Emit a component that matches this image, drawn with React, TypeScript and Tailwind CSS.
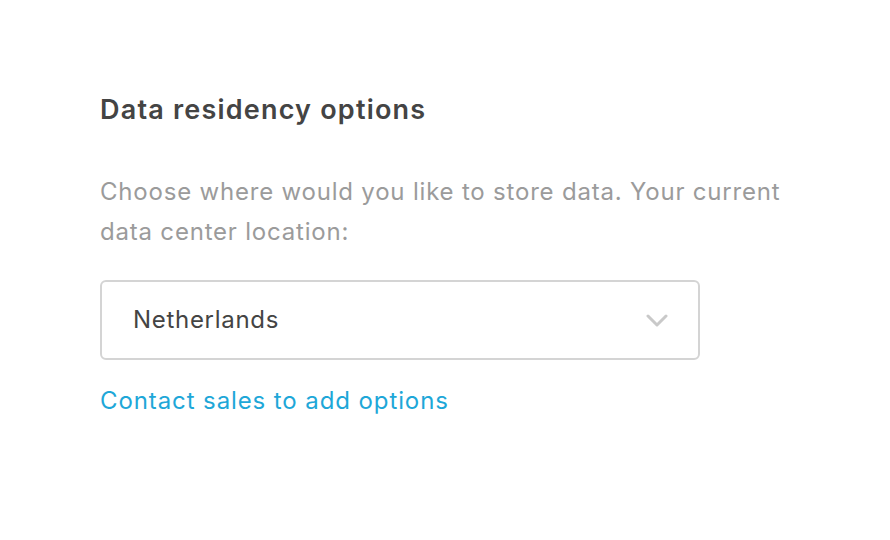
export default function App() {
  return (
    <div
      className="min-h-[540px] w-full bg-white pl-[100px] pt-[92px]"
      style={{ fontFamily: "Inter, sans-serif" }}
    >
      <h2 className="text-[27px] font-semibold leading-[36px] tracking-[1.2px] text-[#444444]">Data residency options</h2>

      <p className="mt-[44px] w-[700px] text-[24px] leading-[40px] tracking-[0.8px] text-[#9b9b9b]">
        Choose where would you like to store data. Your current data center location:
      </p>

      {/* Region select */}
      <div className="mt-[28px] flex h-[80px] w-[600px] items-center justify-between rounded-[6px] border-2 border-[#d4d4d4] pl-[31px] pr-[30px]">
        <span className="text-[24px] tracking-[0.7px] text-[#444444]">Netherlands</span>
        <svg width="22" height="13" viewBox="0 0 22 13" fill="none">
          <path d="M2 2l9 9 9-9" stroke="#c9c9c9" strokeWidth="3" strokeLinecap="round" strokeLinejoin="round" />
        </svg>
      </div>

      <a href="#" className="mt-[21px] block text-[24px] leading-[40px] tracking-[0.9px] text-[#1ea7d8]">
        Contact sales to add options
      </a>
    </div>
  )
}
